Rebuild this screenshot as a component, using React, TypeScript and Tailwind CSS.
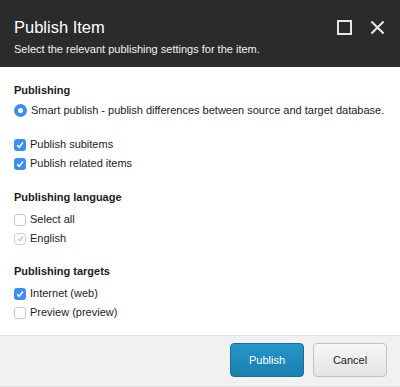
import React from "react";

function Check({ on, disabled }: { on?: boolean; disabled?: boolean }) {
  if (disabled) {
    return (
      <span className="flex h-[12px] w-[12px] shrink-0 items-center justify-center rounded-[3px] border border-[#cfcfcf] bg-white">
        <svg viewBox="0 0 12 12" className="h-[9px] w-[9px]">
          <path d="M2.5 6.5 L5 9 L9.5 3" fill="none" stroke="#9a9a9a" strokeWidth="1.2" />
        </svg>
      </span>
    );
  }
  if (on) {
    return (
      <span className="flex h-[12px] w-[12px] shrink-0 items-center justify-center rounded-[3px] bg-[#3b8ff0]">
        <svg viewBox="0 0 12 12" className="h-[10px] w-[10px]">
          <path d="M2.5 6.2 L5 8.8 L9.5 3" fill="none" stroke="#fff" strokeWidth="1.8" />
        </svg>
      </span>
    );
  }
  return <span className="h-[12px] w-[12px] shrink-0 rounded-[3px] border border-[#c8c8c8] bg-white" />;
}

function Row({ children, className = "" }: { children: React.ReactNode; className?: string }) {
  return <div className={`flex h-[19px] items-center gap-[4px] whitespace-nowrap ${className}`}>{children}</div>;
}

function Heading({ children, className = "" }: { children: React.ReactNode; className?: string }) {
  return <div className={`flex h-[18px] items-center font-bold ${className}`}>{children}</div>;
}

export default function App() {
  return (
    <div className="flex h-[387px] w-[400px] flex-col bg-white font-[family-name:Liberation_Sans,Arial,sans-serif] text-[11px] text-[#1c1c1c]">
      <div className="flex h-[67px] shrink-0 bg-[#2b2b2b] pl-[14px] pr-[15px] pt-[18px] text-white">
        <div className="flex-1">
          <div className="text-[16.5px] leading-[18px]">Publish Item</div>
          <div className="mt-[6px] text-[11px] leading-[14px] text-[#f2f2f2]">
            Select the relevant publishing settings for the item.
          </div>
        </div>
        <div className="flex h-[20px] items-start gap-[18px] pt-[2px]">
          <span className="h-[15px] w-[15px] border-2 border-[#e6e6e6]" />
          <svg viewBox="0 0 16 16" className="h-[15px] w-[15px]">
            <path d="M1.5 1.5 L14.5 14.5 M14.5 1.5 L1.5 14.5" stroke="#e6e6e6" strokeWidth="2.2" />
          </svg>
        </div>
      </div>

      <div className="flex-1 px-[14px] pt-[14px]">
        <Heading>Publishing</Heading>
        <Row className="mt-[2px]">
          <span className="flex h-[13px] w-[13px] shrink-0 items-center justify-center rounded-full bg-[#3b8ff0]">
            <span className="h-[5px] w-[5px] rounded-full bg-white" />
          </span>
          Smart publish - publish differences between source and target database.
        </Row>
        <Row className="mt-[15px]">
          <Check on />
          Publish subitems
        </Row>
        <Row>
          <Check on />
          Publish related items
        </Row>

        <Heading className="mt-[15px]">Publishing language</Heading>
        <Row className="mt-[4px]">
          <Check />
          Select all
        </Row>
        <Row>
          <Check disabled />
          English
        </Row>

        <Heading className="mt-[14px]">Publishing targets</Heading>
        <Row className="mt-[4px]">
          <Check on />
          Internet (web)
        </Row>
        <Row>
          <Check />
          Preview (preview)
        </Row>
      </div>

      <div className="flex h-[52px] shrink-0 items-start justify-end gap-[9px] border-y border-[#e2e2e2] bg-[#f1f1f1] pr-[13px] pt-[7px]">
        <button className="h-[34px] w-[74px] rounded-[4px] border border-[#17709a] bg-gradient-to-b from-[#2596c8] to-[#1a80b0] text-[11px] text-white">
          Publish
        </button>
        <button className="h-[34px] w-[74px] rounded-[4px] border border-[#c4c4c4] bg-gradient-to-b from-[#f7f7f7] to-[#e3e3e3] text-[11px] text-[#1c1c1c]">
          Cancel
        </button>
      </div>
    </div>
  );
}
